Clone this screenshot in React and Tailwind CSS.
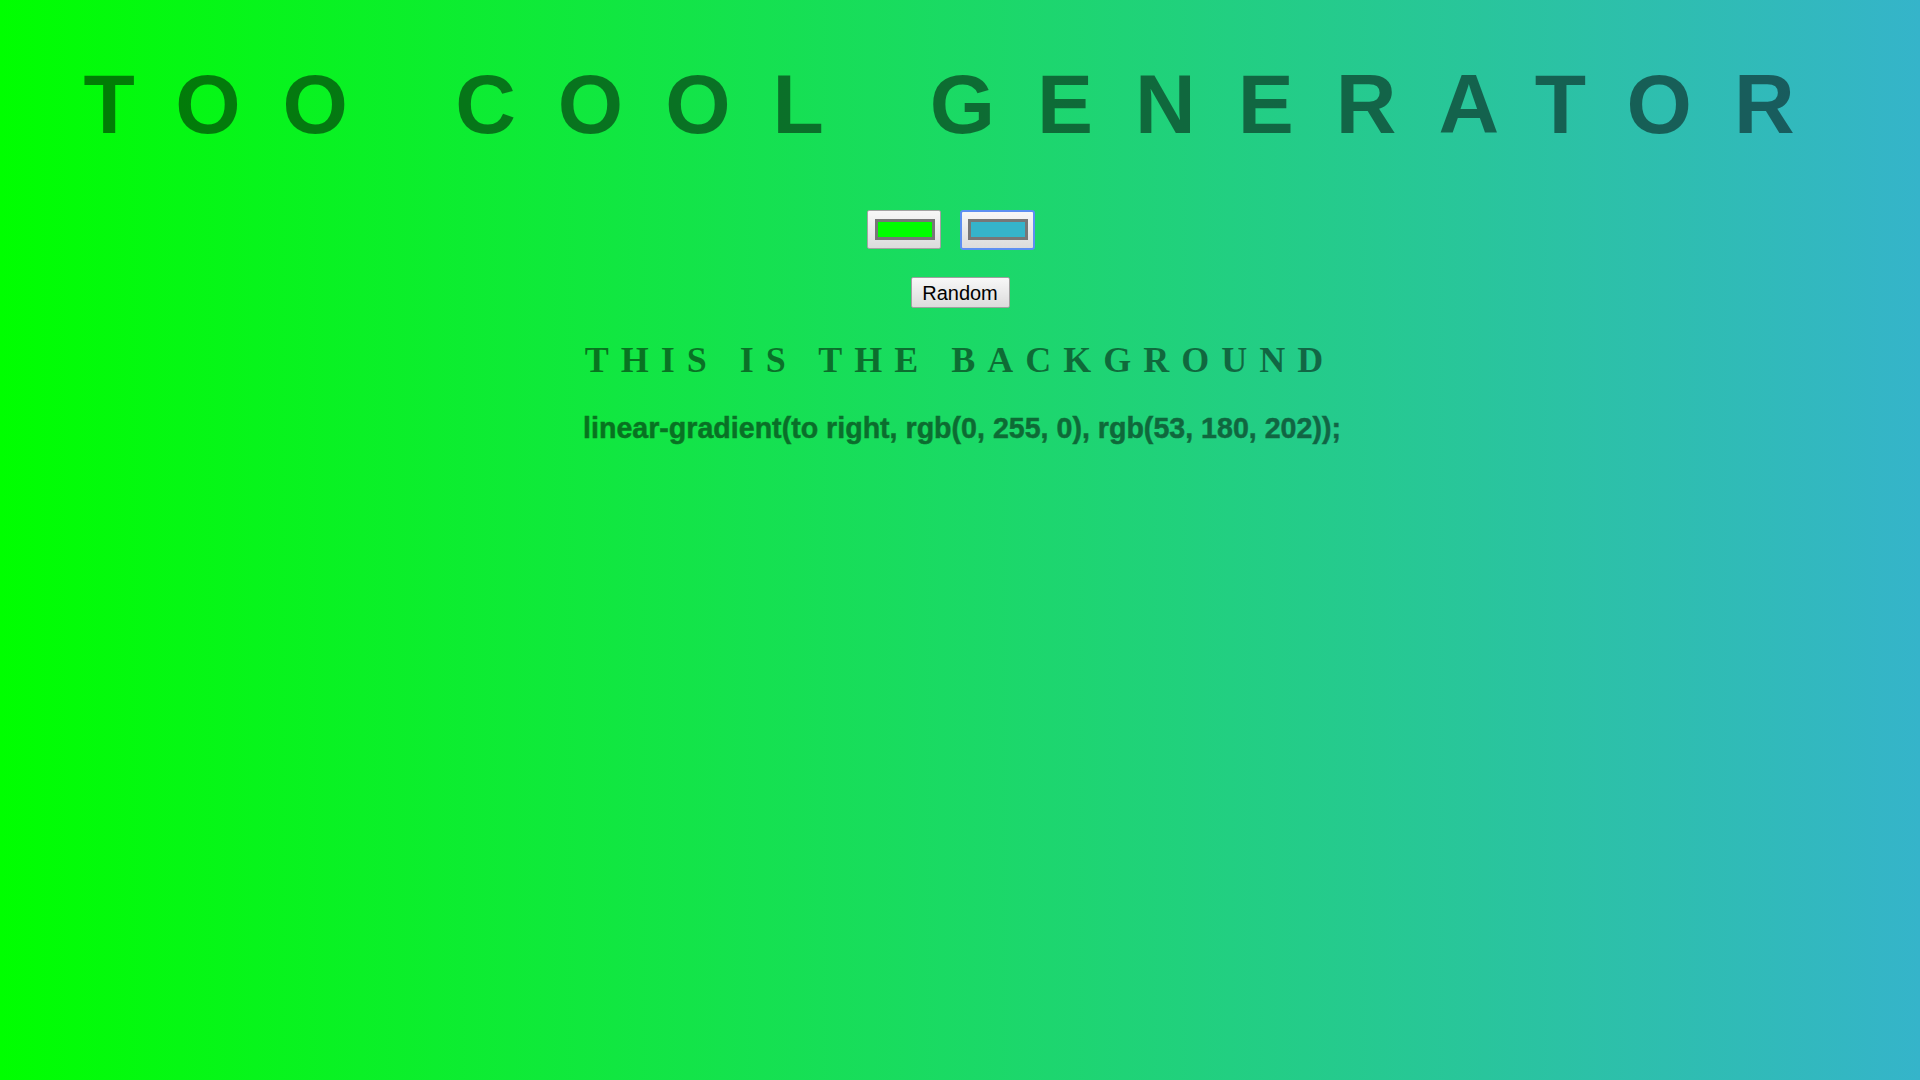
import React, { useState } from 'react';

const START = 'rgb(0, 255, 0)';
const END = 'rgb(53, 180, 202)';

const ColorBox = ({ color, focused }) => {
  if (focused) {
    return (
      <div className="w-[75px] h-[40px] border-2 border-[#5d8ff2] rounded-[3px] bg-[linear-gradient(to_bottom,#f7f7f7,#dcdcdc)] pt-[7px] pl-[6px]">
        <div className="w-[60px] h-[21px] border-[3px] border-[#777777]" style={{ backgroundColor: color }}></div>
      </div>
    );
  }

  return (
    <div className="w-[74px] h-[39px] border border-[#a3a3a3] rounded-[2px] bg-[linear-gradient(to_bottom,#f7f7f7,#dcdcdc)] pt-[8px] pl-[7px]">
      <div className="w-[60px] h-[21px] border-[3px] border-[#777777]" style={{ backgroundColor: color }}></div>
    </div>
  );
};

const App = () => {
  const [colors] = useState([START, END]);

  return (
    <div className="min-h-screen w-full bg-[linear-gradient(to_right,rgb(0,255,0),rgb(53,180,202))] flex flex-col items-center text-center">
      <h1 className="mt-[56px] text-[84px] leading-[96px] font-bold tracking-[0.5em] text-black/50 font-['Liberation_Sans',Arial,sans-serif] whitespace-nowrap">
        TOO COOL GENERATOR
      </h1>

      <div className="w-full flex justify-center items-start gap-[19px] pr-[18px] mt-[58px]">
        <ColorBox color={colors[0]} />
        <ColorBox color={colors[1]} focused />
      </div>

      <button className="mt-[27px] w-[99px] h-[31px] border border-[#a0a0a0] rounded-[2px] bg-[linear-gradient(to_bottom,#f8f8f8,#dcdcdc)] flex items-center justify-center text-[20px] text-black font-['Liberation_Sans',Arial,sans-serif]">
        Random
      </button>

      <h2 className="mt-[32px] text-[36px] leading-[40px] font-bold tracking-[12px] text-black/50 font-['Liberation_Serif','Times_New_Roman',serif] whitespace-nowrap">
        THIS IS THE BACKGROUND
      </h2>

      {/* the reference text reads heavier than plain bold, so stroke it inside a faded group */}
      <h3 className="mt-[32px] ml-[4px] text-[28.6px] leading-[33px] font-bold text-black opacity-50 [-webkit-text-stroke:0.5px_black] font-['Liberation_Sans',Arial,sans-serif] whitespace-nowrap">
        linear-gradient(to right, {colors[0]}, {colors[1]});
      </h3>
    </div>
  );
};

export default App;
